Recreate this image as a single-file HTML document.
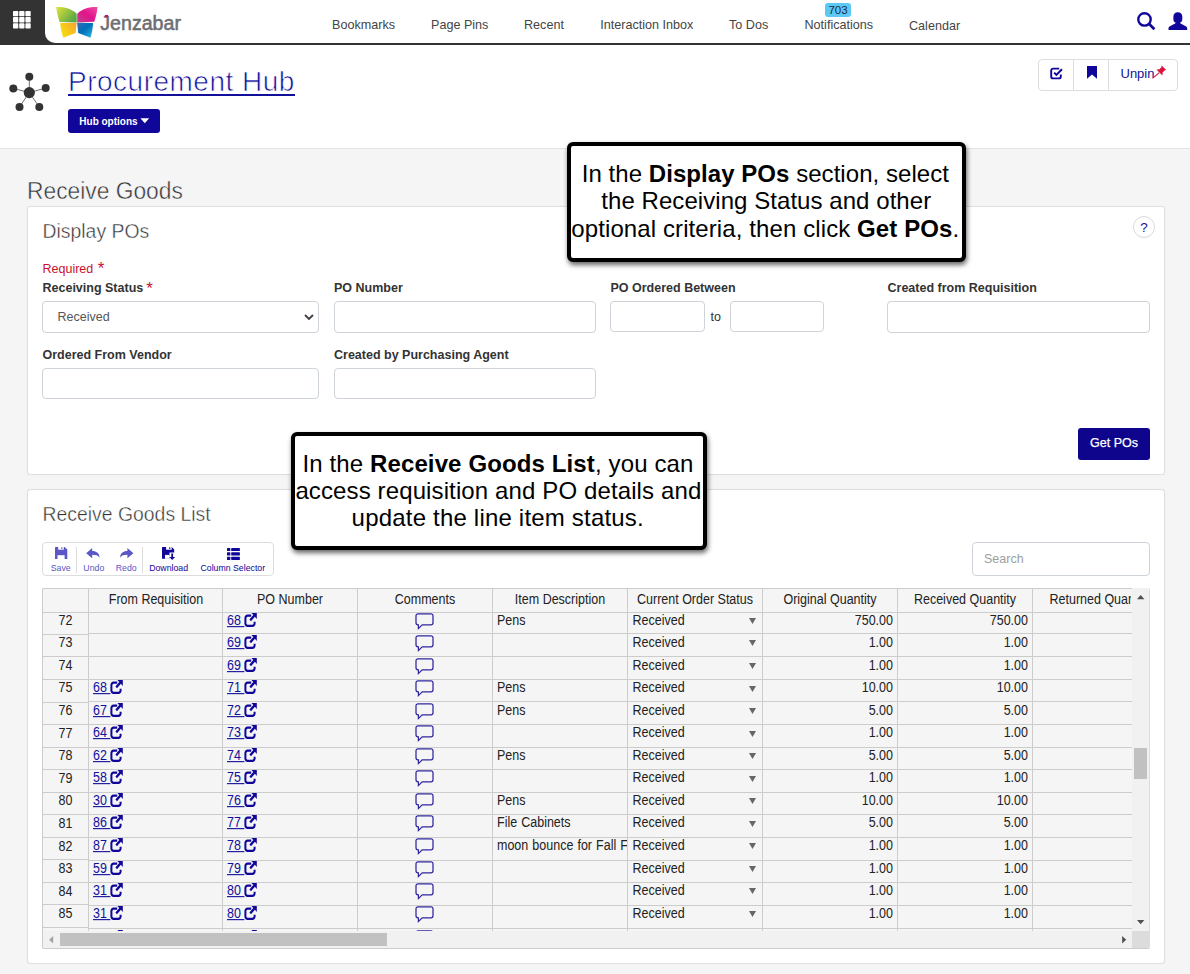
<!DOCTYPE html>
<html lang="en">
<head>
<meta charset="utf-8">
<title>Procurement Hub - Receive Goods</title>
<style>
*{box-sizing:border-box;margin:0;padding:0}
html,body{width:1190px;height:974px;overflow:hidden}
body{position:relative;background:#f5f5f5;font-family:"Liberation Sans",sans-serif;color:#333;font-size:12.5px}
.a{position:absolute}
svg{position:absolute;overflow:visible}
#hdr{position:absolute;left:0;top:0;width:1190px;height:45px;background:#333}
#hdr .logo{position:absolute;left:45px;top:0;width:1145px;height:43px;background:#fff;border-bottom-left-radius:10px}
.nav{position:absolute;top:17px;font-size:12.6px;color:#444;white-space:nowrap;line-height:15px}
.badge{position:absolute;left:825px;top:3px;width:26px;height:14px;background:#5bc8f5;border-radius:3px;font-size:11.5px;line-height:14px;text-align:center;color:#1d2b3a}
#hub{position:absolute;left:0;top:45px;width:1190px;height:104px;background:#fff;border-bottom:1px solid #e3e3e3}
#title{position:absolute;left:68px;top:65px;font-size:28px;line-height:34px;color:#12109a;white-space:nowrap;font-weight:400;letter-spacing:0.5px;-webkit-text-stroke:0.7px #fff}
#title u{text-decoration:none}
#tul{position:absolute;left:68px;top:94px;width:227px;height:2px;background:#12109a}
#hubopt{position:absolute;left:68px;top:109px;width:92px;height:24px;background:#10069a;border-radius:3px;color:#fff;font-size:10px;font-weight:bold;line-height:25px;padding-left:11.3px;white-space:nowrap}
#btng{position:absolute;left:1038px;top:59px;width:140px;height:32px;border:1px solid #ddd;border-radius:4px;background:#fff}
#btng i{position:absolute;top:0;width:1px;height:30px;background:#ddd}
h2.rg{position:absolute;left:27px;top:175px;font-size:22.8px;font-weight:400;color:#333;line-height:30px;white-space:nowrap;-webkit-text-stroke:0.45px #f5f5f5;transform:scaleY(1.07);transform-origin:0 6.2px}
.card{position:absolute;left:27px;width:1138px;background:#fff;border:1px solid #dfdfdf;border-radius:3px;box-shadow:0 0 1px rgba(0,0,0,.08)}
h3{position:absolute;left:42.5px;font-size:19.4px;font-weight:400;color:#333;line-height:26px;white-space:nowrap;-webkit-text-stroke:0.4px #fff;transform:scaleY(1.07);transform-origin:0 5.5px}
.lbl{position:absolute;font-size:12.5px;font-weight:bold;color:#333;line-height:16px;white-space:nowrap}
.inp{position:absolute;height:32px;border:1px solid #ced4da;border-radius:4px;background:#fff}
.req{color:#c8102e}
.callout{position:absolute;background:#fff;border:4px solid #000;border-radius:6px;box-shadow:1px 3px 5px rgba(0,0,0,.6)}
.cl{position:absolute;line-height:28px;color:#000;white-space:nowrap}
#tb{position:absolute;left:42px;top:542px;width:232px;height:34px;border:1px solid #ddd;border-radius:4px;background:#fff}
.tl{position:absolute;top:563px;font-size:8.75px;line-height:10px;white-space:nowrap;text-align:center}
.dis{color:#5b57c6}
.en{color:#10069a}
#grid{position:absolute;left:42px;top:588px;width:1108px;height:361px;background:#f5f5f5;border:1px solid #ccc;border-right-color:#ddd;border-radius:2px}
.hl{position:absolute;height:1px;background:#ccc}
.vl{position:absolute;width:1px;background:#ccc}
.ht{position:absolute;top:591px;height:16px;line-height:16px;font-size:12.5px;color:#222;text-align:center;white-space:nowrap;overflow:hidden;transform:scaleY(1.11);transform-origin:0 3.4px}
.t{position:absolute;height:16px;line-height:16px;font-size:12.5px;color:#222;white-space:nowrap;overflow:hidden;transform:scaleY(1.11);transform-origin:0 12.3px}
.t a{color:#12109a;text-decoration:underline}
.clip{position:absolute;left:43px;top:613px;width:1089px;height:318px;overflow:hidden}
</style>
</head>
<body>
<div id="hdr"><div class="logo"></div></div>
<svg style="left:13px;top:11px" width="18" height="18" viewBox="0 0 18 18"><rect x="0" y="0" width="5.3" height="5.3" rx="0.7" fill="#fff"/><rect x="6.2" y="0" width="5.3" height="5.3" rx="0.7" fill="#fff"/><rect x="12.4" y="0" width="5.3" height="5.3" rx="0.7" fill="#fff"/><rect x="0" y="6.1" width="5.3" height="5.3" rx="0.7" fill="#fff"/><rect x="6.2" y="6.1" width="5.3" height="5.3" rx="0.7" fill="#fff"/><rect x="12.4" y="6.1" width="5.3" height="5.3" rx="0.7" fill="#fff"/><rect x="0" y="12.2" width="5.3" height="5.3" rx="0.7" fill="#fff"/><rect x="6.2" y="12.2" width="5.3" height="5.3" rx="0.7" fill="#fff"/><rect x="12.4" y="12.2" width="5.3" height="5.3" rx="0.7" fill="#fff"/></svg>
<svg style="left:55px;top:6px" width="44" height="33" viewBox="55 6 44 33">
<defs>
<linearGradient id="gg" x1="0" y1="0" x2="1" y2="0.6"><stop offset="0" stop-color="#e3e33a"/><stop offset="0.45" stop-color="#a4c83f"/><stop offset="1" stop-color="#58a847"/></linearGradient>
<linearGradient id="gm" x1="0" y1="1" x2="1" y2="0"><stop offset="0" stop-color="#c4408f"/><stop offset="0.5" stop-color="#e0148a"/><stop offset="1" stop-color="#ef4fa6"/></linearGradient>
<linearGradient id="gy" x1="0" y1="0.6" x2="1" y2="0"><stop offset="0" stop-color="#f5dc14"/><stop offset="0.55" stop-color="#f7be1e"/><stop offset="1" stop-color="#f4a23c"/></linearGradient>
<linearGradient id="gb" x1="0" y1="0" x2="1" y2="1"><stop offset="0" stop-color="#3a6bb8"/><stop offset="0.45" stop-color="#0070b8"/><stop offset="1" stop-color="#2fb8ea"/></linearGradient>
</defs>
<path d="M56.1 7.1 C63 6.8 72 8.6 76.7 13.8 L76.8 22.4 L59.5 22.1 C58 17 56.8 12 56.1 7.1Z" fill="url(#gg)"/>
<path d="M97.5 7.1 C90.5 6.8 82 8.6 77.3 13.8 L77.2 22.4 L94.2 21.7 C96 17 97 12 97.5 7.1Z" fill="url(#gm)"/>
<path d="M60.1 23.1 L76.6 22.8 L75.6 32.9 L63.2 37.7 C61.6 33 60.6 28 60.1 23.1Z" fill="url(#gy)"/>
<path d="M93.1 23.1 L77.1 22.8 L78.2 32.9 L90.5 37.7 C92 33 92.8 28 93.1 23.1Z" fill="url(#gb)"/>
</svg>
<div class="a" style="left:100.3px;top:12px;font-size:19.6px;line-height:22px;color:#6d6e71;white-space:nowrap;-webkit-text-stroke:0.55px #6d6e71">Jenzabar</div>
<div class="a" style="left:105px;top:14.6px;width:2.8px;height:2.2px;background:#e6007e"></div>
<div class="nav" style="left:332px;top:18px">Bookmarks</div>
<div class="nav" style="left:431px;top:18px">Page Pins</div>
<div class="nav" style="left:524px;top:18px">Recent</div>
<div class="nav" style="left:600.3px;top:18px">Interaction Inbox</div>
<div class="nav" style="left:729px;top:18px">To Dos</div>
<div class="nav" style="left:804.5px;top:18px">Notifications</div>
<div class="nav" style="left:909px;top:19px">Calendar</div>
<div class="badge">703</div>
<svg style="left:1137px;top:11px" width="19" height="20" viewBox="0 0 19 20"><circle cx="7.5" cy="8.4" r="6.2" fill="none" stroke="#10069a" stroke-width="2.4"/><path d="M12.2 13 L17.4 18.2" stroke="#10069a" stroke-width="2.7" stroke-linecap="butt"/></svg>
<svg style="left:1167.7px;top:11.6px" width="20" height="19" viewBox="0 0 20 19"><path d="M9.8 0.2 C12.6 0.2 14.3 1.8 14.3 4.6 V7.4 C14.3 8.8 13.4 10 12.2 10.6 V11.2 L18.2 14.6 C19 15.1 19.2 15.8 19.2 16.6 V18.1 H0.5 V16.6 C0.5 15.8 0.7 15.1 1.5 14.6 L7.5 11.2 V10.6 C6.3 10 5.4 8.8 5.4 7.4 V4.6 C5.4 1.8 7 0.2 9.8 0.2Z" fill="#10069a"/></svg>
<div id="hub"></div>
<svg style="left:0;top:45px" width="60" height="104" viewBox="0 45 60 104"><line x1="29.3" y1="92.6" x2="29.3" y2="76.7" stroke="#333" stroke-width="0.7"/><line x1="29.3" y1="92.6" x2="13.3" y2="88.4" stroke="#333" stroke-width="0.7"/><line x1="29.3" y1="92.6" x2="45.7" y2="88.1" stroke="#333" stroke-width="0.7"/><line x1="29.3" y1="92.6" x2="19.5" y2="106.9" stroke="#333" stroke-width="0.7"/><line x1="29.3" y1="92.6" x2="39.3" y2="106.9" stroke="#333" stroke-width="0.7"/><circle cx="29.3" cy="76.7" r="4" fill="#333"/><circle cx="13.3" cy="88.4" r="4" fill="#333"/><circle cx="45.7" cy="88.1" r="4" fill="#333"/><circle cx="19.5" cy="106.9" r="4" fill="#333"/><circle cx="39.3" cy="106.9" r="4" fill="#333"/><circle cx="29.3" cy="92.6" r="5.6" fill="#333"/></svg>
<div id="title">Procurement Hub</div><div id="tul"></div>
<div id="hubopt">Hub options<svg style="left:71.8px;top:8.6px" width="9.6" height="5.6" viewBox="0 0 10 6"><path d="M0.3 0.3 L9.7 0.3 L5 5.6Z" fill="#fff"/></svg></div>
<div id="btng"><i style="left:34px"></i><i style="left:69px"></i></div>
<svg style="left:1050px;top:66.5px" width="13" height="13" viewBox="0 0 13 13"><path d="M9.2 1.6 H3.2 A2 2 0 0 0 1.2 3.6 V9.4 A2 2 0 0 0 3.2 11.4 H8.8 A2 2 0 0 0 10.8 9.4 V7.6" fill="none" stroke="#10069a" stroke-width="1.9"/><path d="M4.2 5.6 L6.4 7.9 L12 2.2" fill="none" stroke="#10069a" stroke-width="2"/></svg>
<svg style="left:1087px;top:66px" width="10" height="13" viewBox="0 0 10 13"><path d="M0 0 H10 V12.8 L5 8.6 L0 12.8Z" fill="#10069a"/></svg>
<div class="a" style="left:1120.5px;top:66px;font-size:13px;line-height:16px;color:#12109a;white-space:nowrap">Unpin</div>
<svg style="left:1152px;top:65px" width="15" height="14" viewBox="0 0 15 14"><path d="M9.6 0.6 L14.2 5 L12.6 5.4 L10.6 7.4 L10.4 10.4 L4.4 4.6 L7.4 4.2 L9.4 2.2Z" fill="#dc143c"/><path d="M7.2 7.6 L0.6 13.4" stroke="#dc143c" stroke-width="1.1"/></svg>
<h2 class="rg">Receive Goods</h2>
<div class="card" style="top:206px;height:269px"></div>
<h3 style="top:217px">Display POs</h3>
<div class="a" style="left:1133px;top:216px;width:22px;height:22px;border:1px solid #d9d9d9;border-radius:11px;background:#fff;color:#12109a;font-size:13.5px;line-height:22px;text-align:center">?</div>
<div class="a req" style="left:42.5px;top:261px;font-size:12.5px;line-height:16px;white-space:nowrap">Required <span style="font-size:17px;line-height:10px;position:relative;top:0.6px;left:1px">*</span></div>
<div class="lbl" style="left:42.5px;top:280px">Receiving Status<span class="req" style="font-size:17px;line-height:10px;position:relative;top:1.7px;left:3px;font-weight:normal">*</span></div>
<div class="lbl" style="left:334px;top:280px">PO Number</div>
<div class="lbl" style="left:610.5px;top:280px">PO Ordered Between</div>
<div class="lbl" style="left:887.5px;top:280px">Created from Requisition</div>
<div class="lbl" style="left:42.5px;top:347px">Ordered From Vendor</div>
<div class="lbl" style="left:334px;top:347px">Created by Purchasing Agent</div>
<div class="inp" style="left:42px;top:301px;width:277px;height:32px"></div>
<div class="inp" style="left:334px;top:301px;width:262px;height:32px"></div>
<div class="inp" style="left:610px;top:301px;width:95px;height:31px"></div>
<div class="inp" style="left:730px;top:301px;width:94px;height:31px"></div>
<div class="inp" style="left:887px;top:301px;width:263px;height:32px"></div>
<div class="inp" style="left:42px;top:368px;width:277px;height:31px"></div>
<div class="inp" style="left:334px;top:368px;width:262px;height:31px"></div>
<div class="a" style="left:57.5px;top:308.5px;font-size:12.5px;line-height:16px;color:#555">Received</div>
<svg style="left:304px;top:314px" width="10" height="7" viewBox="0 0 10 7"><path d="M1 1 L5 5 L9 1" fill="none" stroke="#404040" stroke-width="1.9"/></svg>
<div class="a" style="left:710.5px;top:308.5px;font-size:12.5px;line-height:16px;color:#333">to</div>
<div class="a" style="left:1078px;top:428px;width:72px;height:32px;background:#0e058c;border-radius:3px;color:#fff;font-size:12.5px;line-height:30px;text-align:center;-webkit-text-stroke:0.25px #fff">Get POs</div>
<div class="card" style="top:489px;height:475px"></div>
<h3 style="top:500px">Receive Goods List</h3>
<div id="tb"></div>
<div class="vl" style="left:76px;top:547px;height:26px;background:#ddd"></div><div class="vl" style="left:142px;top:547px;height:26px;background:#ddd"></div>
<svg style="left:54.6px;top:546.9px" width="12.3" height="12" viewBox="0 0 12.3 12"><path d="M0 0.5 Q0 0 0.5 0 H9.7 L12.3 2.6 V12 H0Z" fill="#5b57c6"/><rect x="3.2" y="0" width="5.6" height="2.7" fill="#fff"/><rect x="6.3" y="0.3" width="1.1" height="1.7" fill="#5b57c6"/><rect x="2.5" y="8.2" width="7.1" height="3.8" fill="#fff"/></svg>
<svg style="left:86.3px;top:547.8px" width="13.6" height="10.3" viewBox="0 0 13.6 10.3"><path d="M6.2 0 V2.9 C10.5 2.9 13.3 5 13.6 9.8 C12 7.4 10 6.8 6.2 6.8 V10.3 L0.2 5.2Z" fill="#5b57c6"/></svg>
<svg style="left:119.6px;top:547.8px" width="13.6" height="10.3" viewBox="0 0 13.6 10.3"><path d="M7.4 0 V2.9 C3.1 2.9 0.3 5 0 9.8 C1.6 7.4 3.6 6.8 7.4 6.8 V10.3 L13.4 5.2Z" fill="#5b57c6"/></svg>
<svg style="left:162.2px;top:546.8px" width="13.2" height="13" viewBox="0 0 13.2 13"><path d="M0 0.5 Q0 0 0.5 0 H9.8 L12.2 2.4 V5.4 H7.5 V11.8 H0Z" fill="#10069a"/><rect x="4.1" y="0" width="5.6" height="2.7" fill="#fff"/><rect x="7.2" y="0.3" width="1.1" height="1.7" fill="#10069a"/><rect x="3" y="7.9" width="4.6" height="3.9" fill="#fff"/><path d="M9.3 6.6 H11.1 V10 H13.1 L10.2 13 L7.3 10 H9.3Z" fill="#10069a"/></svg>
<svg style="left:226.5px;top:547.9px" width="13" height="12" viewBox="0 0 13 12"><rect x="0" y="0" width="3.3" height="3.1" rx="0.5" fill="#10069a"/><rect x="4.2" y="0" width="8.7" height="3.1" rx="0.4" fill="#10069a"/><rect x="0" y="4.3" width="3.3" height="3.3" rx="0.5" fill="#10069a"/><rect x="4.2" y="4.3" width="8.7" height="3.3" rx="0.4" fill="#10069a"/><rect x="0" y="8.8" width="3.3" height="3.1" rx="0.5" fill="#10069a"/><rect x="4.2" y="8.8" width="8.7" height="3.1" rx="0.4" fill="#10069a"/></svg>
<div class="tl dis" style="left:15.7px;width:90px">Save</div>
<div class="tl dis" style="left:48.8px;width:90px">Undo</div>
<div class="tl dis" style="left:81.2px;width:90px">Redo</div>
<div class="tl en" style="left:123.6px;width:90px">Download</div>
<div class="tl en" style="left:187.8px;width:90px">Column Selector</div>
<div class="inp" style="left:972px;top:542px;width:178px;height:34px"></div><div class="a" style="left:984px;top:551px;font-size:12.5px;line-height:16px;color:#9e9e9e">Search</div>
<div id="grid"></div>
<div class="a" style="left:1132px;top:588px;width:17px;height:360px;background:#f1f1f1"></div>
<div class="a" style="left:43px;top:931px;width:1106px;height:17px;background:#f1f1f1"></div>
<div class="a" style="left:1132px;top:931px;width:17px;height:17px;background:#dcdcdc"></div>
<div class="a" style="left:1134px;top:748px;width:13px;height:31px;background:#c1c1c1"></div>
<div class="a" style="left:60px;top:933px;width:327px;height:13px;background:#c1c1c1"></div>
<svg style="left:1136.8px;top:595px" width="7.4" height="4.3" viewBox="0 0 9 5"><path d="M4.5 0 L9 5 H0Z" fill="#505050"/></svg>
<svg style="left:1136.8px;top:920px" width="7.4" height="4.3" viewBox="0 0 9 5"><path d="M0 0 H9 L4.5 5Z" fill="#505050"/></svg>
<svg style="left:49px;top:936px" width="4.3" height="7.4" viewBox="0 0 5 9"><path d="M5 0 V9 L0 4.5Z" fill="#a3a3a3"/></svg>
<svg style="left:1122px;top:936px" width="4.3" height="7.4" viewBox="0 0 5 9"><path d="M0 0 V9 L5 4.5Z" fill="#505050"/></svg>
<div class="hl" style="left:43px;top:612px;width:1089px"></div>
<div class="ht" style="left:89px;width:134px">From Requisition</div>
<div class="ht" style="left:223px;width:134px">PO Number</div>
<div class="ht" style="left:358px;width:134px">Comments</div>
<div class="ht" style="left:493px;width:134px">Item Description</div>
<div class="ht" style="left:628px;width:134px">Current Order Status</div>
<div class="ht" style="left:763px;width:134px">Original Quantity</div>
<div class="ht" style="left:898px;width:134px">Received Quantity</div>
<div class="ht" style="left:1033px;width:98.4px;text-align:left;padding-left:16.5px">Returned Quantity</div>
<div class="vl" style="left:88px;top:589px;height:342px"></div>
<div class="vl" style="left:222px;top:589px;height:342px"></div>
<div class="vl" style="left:357px;top:589px;height:342px"></div>
<div class="vl" style="left:492px;top:589px;height:342px"></div>
<div class="vl" style="left:627px;top:589px;height:342px"></div>
<div class="vl" style="left:762px;top:589px;height:342px"></div>
<div class="vl" style="left:897px;top:589px;height:342px"></div>
<div class="vl" style="left:1032px;top:589px;height:342px"></div>
<div class="clip">
<div class="hl" style="left:45px;top:20px;width:1044px"></div><div class="hl" style="left:0;top:21px;width:46px"></div><div class="t" style="left:0;top:-0.30px;width:45px;text-align:center">72</div><div class="t" style="left:184px;top:-0.40px;width:130px;height:18px"><a>68&nbsp;</a><svg style="position:relative;display:inline-block;vertical-align:-1.7px;margin-left:0px" width="13" height="13" viewBox="0 0 13 13"><path d="M7.2 2.6 H3.6 A2.2 2.2 0 0 0 1.4 4.8 V9.6 A2.2 2.2 0 0 0 3.6 11.8 H8.4 A2.2 2.2 0 0 0 10.6 9.6 V8" fill="none" stroke="#10069a" stroke-width="2"/><path d="M7.4 0.2 H12.8 V5.6 L10.9 3.7 L7 7.6 L5.4 6 L9.3 2.1Z" fill="#10069a"/></svg></div><div class="a" style="left:371.5px;top:-0.40px;width:19px;height:17px"><svg style="left:0;top:0" width="19" height="17" viewBox="0 0 19 17"><path d="M3 0.8 H16 A2 2 0 0 1 18 2.8 V9.8 A2 2 0 0 1 16 11.8 H7.2 L3.4 15.6 V11.8 H3 A2 2 0 0 1 1 9.8 V2.8 A2 2 0 0 1 3 0.8Z" fill="none" stroke="#2f279e" stroke-width="1.25"/></svg></div><div class="t" style="left:454px;top:-0.40px;width:130px;word-spacing:0.6px">Pens</div><div class="t" style="left:589.5px;top:-0.40px;width:100px">Received</div><svg style="left:705.5px;top:4.90px" width="7" height="6" viewBox="0 0 7 6"><path d="M0 0 H7 L3.5 6Z" fill="#666"/></svg><div class="t" style="left:720px;top:-0.40px;width:130px;text-align:right">750.00</div><div class="t" style="left:855px;top:-0.40px;width:130px;text-align:right">750.00</div>
<div class="hl" style="left:45px;top:43px;width:1044px"></div><div class="hl" style="left:0;top:43px;width:46px"></div><div class="t" style="left:0;top:22.29px;width:45px;text-align:center">73</div><div class="t" style="left:184px;top:22.14px;width:130px;height:18px"><a>69&nbsp;</a><svg style="position:relative;display:inline-block;vertical-align:-1.7px;margin-left:0px" width="13" height="13" viewBox="0 0 13 13"><path d="M7.2 2.6 H3.6 A2.2 2.2 0 0 0 1.4 4.8 V9.6 A2.2 2.2 0 0 0 3.6 11.8 H8.4 A2.2 2.2 0 0 0 10.6 9.6 V8" fill="none" stroke="#10069a" stroke-width="2"/><path d="M7.4 0.2 H12.8 V5.6 L10.9 3.7 L7 7.6 L5.4 6 L9.3 2.1Z" fill="#10069a"/></svg></div><div class="a" style="left:371.5px;top:22.14px;width:19px;height:17px"><svg style="left:0;top:0" width="19" height="17" viewBox="0 0 19 17"><path d="M3 0.8 H16 A2 2 0 0 1 18 2.8 V9.8 A2 2 0 0 1 16 11.8 H7.2 L3.4 15.6 V11.8 H3 A2 2 0 0 1 1 9.8 V2.8 A2 2 0 0 1 3 0.8Z" fill="none" stroke="#2f279e" stroke-width="1.25"/></svg></div><div class="t" style="left:589.5px;top:22.14px;width:100px">Received</div><svg style="left:705.5px;top:27.44px" width="7" height="6" viewBox="0 0 7 6"><path d="M0 0 H7 L3.5 6Z" fill="#666"/></svg><div class="t" style="left:720px;top:22.14px;width:130px;text-align:right">1.00</div><div class="t" style="left:855px;top:22.14px;width:130px;text-align:right">1.00</div>
<div class="hl" style="left:45px;top:66px;width:1044px"></div><div class="hl" style="left:0;top:66px;width:46px"></div><div class="t" style="left:0;top:44.88px;width:45px;text-align:center">74</div><div class="t" style="left:184px;top:44.68px;width:130px;height:18px"><a>69&nbsp;</a><svg style="position:relative;display:inline-block;vertical-align:-1.7px;margin-left:0px" width="13" height="13" viewBox="0 0 13 13"><path d="M7.2 2.6 H3.6 A2.2 2.2 0 0 0 1.4 4.8 V9.6 A2.2 2.2 0 0 0 3.6 11.8 H8.4 A2.2 2.2 0 0 0 10.6 9.6 V8" fill="none" stroke="#10069a" stroke-width="2"/><path d="M7.4 0.2 H12.8 V5.6 L10.9 3.7 L7 7.6 L5.4 6 L9.3 2.1Z" fill="#10069a"/></svg></div><div class="a" style="left:371.5px;top:44.68px;width:19px;height:17px"><svg style="left:0;top:0" width="19" height="17" viewBox="0 0 19 17"><path d="M3 0.8 H16 A2 2 0 0 1 18 2.8 V9.8 A2 2 0 0 1 16 11.8 H7.2 L3.4 15.6 V11.8 H3 A2 2 0 0 1 1 9.8 V2.8 A2 2 0 0 1 3 0.8Z" fill="none" stroke="#2f279e" stroke-width="1.25"/></svg></div><div class="t" style="left:589.5px;top:44.68px;width:100px">Received</div><svg style="left:705.5px;top:49.98px" width="7" height="6" viewBox="0 0 7 6"><path d="M0 0 H7 L3.5 6Z" fill="#666"/></svg><div class="t" style="left:720px;top:44.68px;width:130px;text-align:right">1.00</div><div class="t" style="left:855px;top:44.68px;width:130px;text-align:right">1.00</div>
<div class="hl" style="left:45px;top:88px;width:1044px"></div><div class="hl" style="left:0;top:89px;width:46px"></div><div class="t" style="left:0;top:67.47px;width:45px;text-align:center">75</div><div class="t" style="left:50px;top:67.22px;width:130px;height:18px"><a>68&nbsp;</a><svg style="position:relative;display:inline-block;vertical-align:-1.7px;margin-left:0px" width="13" height="13" viewBox="0 0 13 13"><path d="M7.2 2.6 H3.6 A2.2 2.2 0 0 0 1.4 4.8 V9.6 A2.2 2.2 0 0 0 3.6 11.8 H8.4 A2.2 2.2 0 0 0 10.6 9.6 V8" fill="none" stroke="#10069a" stroke-width="2"/><path d="M7.4 0.2 H12.8 V5.6 L10.9 3.7 L7 7.6 L5.4 6 L9.3 2.1Z" fill="#10069a"/></svg></div><div class="t" style="left:184px;top:67.22px;width:130px;height:18px"><a>71&nbsp;</a><svg style="position:relative;display:inline-block;vertical-align:-1.7px;margin-left:0px" width="13" height="13" viewBox="0 0 13 13"><path d="M7.2 2.6 H3.6 A2.2 2.2 0 0 0 1.4 4.8 V9.6 A2.2 2.2 0 0 0 3.6 11.8 H8.4 A2.2 2.2 0 0 0 10.6 9.6 V8" fill="none" stroke="#10069a" stroke-width="2"/><path d="M7.4 0.2 H12.8 V5.6 L10.9 3.7 L7 7.6 L5.4 6 L9.3 2.1Z" fill="#10069a"/></svg></div><div class="a" style="left:371.5px;top:67.22px;width:19px;height:17px"><svg style="left:0;top:0" width="19" height="17" viewBox="0 0 19 17"><path d="M3 0.8 H16 A2 2 0 0 1 18 2.8 V9.8 A2 2 0 0 1 16 11.8 H7.2 L3.4 15.6 V11.8 H3 A2 2 0 0 1 1 9.8 V2.8 A2 2 0 0 1 3 0.8Z" fill="none" stroke="#2f279e" stroke-width="1.25"/></svg></div><div class="t" style="left:454px;top:67.22px;width:130px;word-spacing:0.6px">Pens</div><div class="t" style="left:589.5px;top:67.22px;width:100px">Received</div><svg style="left:705.5px;top:72.52px" width="7" height="6" viewBox="0 0 7 6"><path d="M0 0 H7 L3.5 6Z" fill="#666"/></svg><div class="t" style="left:720px;top:67.22px;width:130px;text-align:right">10.00</div><div class="t" style="left:855px;top:67.22px;width:130px;text-align:right">10.00</div>
<div class="hl" style="left:45px;top:111px;width:1044px"></div><div class="hl" style="left:0;top:111px;width:46px"></div><div class="t" style="left:0;top:90.06px;width:45px;text-align:center">76</div><div class="t" style="left:50px;top:89.76px;width:130px;height:18px"><a>67&nbsp;</a><svg style="position:relative;display:inline-block;vertical-align:-1.7px;margin-left:0px" width="13" height="13" viewBox="0 0 13 13"><path d="M7.2 2.6 H3.6 A2.2 2.2 0 0 0 1.4 4.8 V9.6 A2.2 2.2 0 0 0 3.6 11.8 H8.4 A2.2 2.2 0 0 0 10.6 9.6 V8" fill="none" stroke="#10069a" stroke-width="2"/><path d="M7.4 0.2 H12.8 V5.6 L10.9 3.7 L7 7.6 L5.4 6 L9.3 2.1Z" fill="#10069a"/></svg></div><div class="t" style="left:184px;top:89.76px;width:130px;height:18px"><a>72&nbsp;</a><svg style="position:relative;display:inline-block;vertical-align:-1.7px;margin-left:0px" width="13" height="13" viewBox="0 0 13 13"><path d="M7.2 2.6 H3.6 A2.2 2.2 0 0 0 1.4 4.8 V9.6 A2.2 2.2 0 0 0 3.6 11.8 H8.4 A2.2 2.2 0 0 0 10.6 9.6 V8" fill="none" stroke="#10069a" stroke-width="2"/><path d="M7.4 0.2 H12.8 V5.6 L10.9 3.7 L7 7.6 L5.4 6 L9.3 2.1Z" fill="#10069a"/></svg></div><div class="a" style="left:371.5px;top:89.76px;width:19px;height:17px"><svg style="left:0;top:0" width="19" height="17" viewBox="0 0 19 17"><path d="M3 0.8 H16 A2 2 0 0 1 18 2.8 V9.8 A2 2 0 0 1 16 11.8 H7.2 L3.4 15.6 V11.8 H3 A2 2 0 0 1 1 9.8 V2.8 A2 2 0 0 1 3 0.8Z" fill="none" stroke="#2f279e" stroke-width="1.25"/></svg></div><div class="t" style="left:454px;top:89.76px;width:130px;word-spacing:0.6px">Pens</div><div class="t" style="left:589.5px;top:89.76px;width:100px">Received</div><svg style="left:705.5px;top:95.06px" width="7" height="6" viewBox="0 0 7 6"><path d="M0 0 H7 L3.5 6Z" fill="#666"/></svg><div class="t" style="left:720px;top:89.76px;width:130px;text-align:right">5.00</div><div class="t" style="left:855px;top:89.76px;width:130px;text-align:right">5.00</div>
<div class="hl" style="left:45px;top:134px;width:1044px"></div><div class="hl" style="left:0;top:134px;width:46px"></div><div class="t" style="left:0;top:112.65px;width:45px;text-align:center">77</div><div class="t" style="left:50px;top:112.30px;width:130px;height:18px"><a>64&nbsp;</a><svg style="position:relative;display:inline-block;vertical-align:-1.7px;margin-left:0px" width="13" height="13" viewBox="0 0 13 13"><path d="M7.2 2.6 H3.6 A2.2 2.2 0 0 0 1.4 4.8 V9.6 A2.2 2.2 0 0 0 3.6 11.8 H8.4 A2.2 2.2 0 0 0 10.6 9.6 V8" fill="none" stroke="#10069a" stroke-width="2"/><path d="M7.4 0.2 H12.8 V5.6 L10.9 3.7 L7 7.6 L5.4 6 L9.3 2.1Z" fill="#10069a"/></svg></div><div class="t" style="left:184px;top:112.30px;width:130px;height:18px"><a>73&nbsp;</a><svg style="position:relative;display:inline-block;vertical-align:-1.7px;margin-left:0px" width="13" height="13" viewBox="0 0 13 13"><path d="M7.2 2.6 H3.6 A2.2 2.2 0 0 0 1.4 4.8 V9.6 A2.2 2.2 0 0 0 3.6 11.8 H8.4 A2.2 2.2 0 0 0 10.6 9.6 V8" fill="none" stroke="#10069a" stroke-width="2"/><path d="M7.4 0.2 H12.8 V5.6 L10.9 3.7 L7 7.6 L5.4 6 L9.3 2.1Z" fill="#10069a"/></svg></div><div class="a" style="left:371.5px;top:112.30px;width:19px;height:17px"><svg style="left:0;top:0" width="19" height="17" viewBox="0 0 19 17"><path d="M3 0.8 H16 A2 2 0 0 1 18 2.8 V9.8 A2 2 0 0 1 16 11.8 H7.2 L3.4 15.6 V11.8 H3 A2 2 0 0 1 1 9.8 V2.8 A2 2 0 0 1 3 0.8Z" fill="none" stroke="#2f279e" stroke-width="1.25"/></svg></div><div class="t" style="left:589.5px;top:112.30px;width:100px">Received</div><svg style="left:705.5px;top:117.60px" width="7" height="6" viewBox="0 0 7 6"><path d="M0 0 H7 L3.5 6Z" fill="#666"/></svg><div class="t" style="left:720px;top:112.30px;width:130px;text-align:right">1.00</div><div class="t" style="left:855px;top:112.30px;width:130px;text-align:right">1.00</div>
<div class="hl" style="left:45px;top:156px;width:1044px"></div><div class="hl" style="left:0;top:156px;width:46px"></div><div class="t" style="left:0;top:135.24px;width:45px;text-align:center">78</div><div class="t" style="left:50px;top:134.84px;width:130px;height:18px"><a>62&nbsp;</a><svg style="position:relative;display:inline-block;vertical-align:-1.7px;margin-left:0px" width="13" height="13" viewBox="0 0 13 13"><path d="M7.2 2.6 H3.6 A2.2 2.2 0 0 0 1.4 4.8 V9.6 A2.2 2.2 0 0 0 3.6 11.8 H8.4 A2.2 2.2 0 0 0 10.6 9.6 V8" fill="none" stroke="#10069a" stroke-width="2"/><path d="M7.4 0.2 H12.8 V5.6 L10.9 3.7 L7 7.6 L5.4 6 L9.3 2.1Z" fill="#10069a"/></svg></div><div class="t" style="left:184px;top:134.84px;width:130px;height:18px"><a>74&nbsp;</a><svg style="position:relative;display:inline-block;vertical-align:-1.7px;margin-left:0px" width="13" height="13" viewBox="0 0 13 13"><path d="M7.2 2.6 H3.6 A2.2 2.2 0 0 0 1.4 4.8 V9.6 A2.2 2.2 0 0 0 3.6 11.8 H8.4 A2.2 2.2 0 0 0 10.6 9.6 V8" fill="none" stroke="#10069a" stroke-width="2"/><path d="M7.4 0.2 H12.8 V5.6 L10.9 3.7 L7 7.6 L5.4 6 L9.3 2.1Z" fill="#10069a"/></svg></div><div class="a" style="left:371.5px;top:134.84px;width:19px;height:17px"><svg style="left:0;top:0" width="19" height="17" viewBox="0 0 19 17"><path d="M3 0.8 H16 A2 2 0 0 1 18 2.8 V9.8 A2 2 0 0 1 16 11.8 H7.2 L3.4 15.6 V11.8 H3 A2 2 0 0 1 1 9.8 V2.8 A2 2 0 0 1 3 0.8Z" fill="none" stroke="#2f279e" stroke-width="1.25"/></svg></div><div class="t" style="left:454px;top:134.84px;width:130px;word-spacing:0.6px">Pens</div><div class="t" style="left:589.5px;top:134.84px;width:100px">Received</div><svg style="left:705.5px;top:140.14px" width="7" height="6" viewBox="0 0 7 6"><path d="M0 0 H7 L3.5 6Z" fill="#666"/></svg><div class="t" style="left:720px;top:134.84px;width:130px;text-align:right">5.00</div><div class="t" style="left:855px;top:134.84px;width:130px;text-align:right">5.00</div>
<div class="hl" style="left:45px;top:179px;width:1044px"></div><div class="hl" style="left:0;top:179px;width:46px"></div><div class="t" style="left:0;top:157.83px;width:45px;text-align:center">79</div><div class="t" style="left:50px;top:157.38px;width:130px;height:18px"><a>58&nbsp;</a><svg style="position:relative;display:inline-block;vertical-align:-1.7px;margin-left:0px" width="13" height="13" viewBox="0 0 13 13"><path d="M7.2 2.6 H3.6 A2.2 2.2 0 0 0 1.4 4.8 V9.6 A2.2 2.2 0 0 0 3.6 11.8 H8.4 A2.2 2.2 0 0 0 10.6 9.6 V8" fill="none" stroke="#10069a" stroke-width="2"/><path d="M7.4 0.2 H12.8 V5.6 L10.9 3.7 L7 7.6 L5.4 6 L9.3 2.1Z" fill="#10069a"/></svg></div><div class="t" style="left:184px;top:157.38px;width:130px;height:18px"><a>75&nbsp;</a><svg style="position:relative;display:inline-block;vertical-align:-1.7px;margin-left:0px" width="13" height="13" viewBox="0 0 13 13"><path d="M7.2 2.6 H3.6 A2.2 2.2 0 0 0 1.4 4.8 V9.6 A2.2 2.2 0 0 0 3.6 11.8 H8.4 A2.2 2.2 0 0 0 10.6 9.6 V8" fill="none" stroke="#10069a" stroke-width="2"/><path d="M7.4 0.2 H12.8 V5.6 L10.9 3.7 L7 7.6 L5.4 6 L9.3 2.1Z" fill="#10069a"/></svg></div><div class="a" style="left:371.5px;top:157.38px;width:19px;height:17px"><svg style="left:0;top:0" width="19" height="17" viewBox="0 0 19 17"><path d="M3 0.8 H16 A2 2 0 0 1 18 2.8 V9.8 A2 2 0 0 1 16 11.8 H7.2 L3.4 15.6 V11.8 H3 A2 2 0 0 1 1 9.8 V2.8 A2 2 0 0 1 3 0.8Z" fill="none" stroke="#2f279e" stroke-width="1.25"/></svg></div><div class="t" style="left:589.5px;top:157.38px;width:100px">Received</div><svg style="left:705.5px;top:162.68px" width="7" height="6" viewBox="0 0 7 6"><path d="M0 0 H7 L3.5 6Z" fill="#666"/></svg><div class="t" style="left:720px;top:157.38px;width:130px;text-align:right">1.00</div><div class="t" style="left:855px;top:157.38px;width:130px;text-align:right">1.00</div>
<div class="hl" style="left:45px;top:201px;width:1044px"></div><div class="hl" style="left:0;top:201px;width:46px"></div><div class="t" style="left:0;top:180.42px;width:45px;text-align:center">80</div><div class="t" style="left:50px;top:179.92px;width:130px;height:18px"><a>30&nbsp;</a><svg style="position:relative;display:inline-block;vertical-align:-1.7px;margin-left:0px" width="13" height="13" viewBox="0 0 13 13"><path d="M7.2 2.6 H3.6 A2.2 2.2 0 0 0 1.4 4.8 V9.6 A2.2 2.2 0 0 0 3.6 11.8 H8.4 A2.2 2.2 0 0 0 10.6 9.6 V8" fill="none" stroke="#10069a" stroke-width="2"/><path d="M7.4 0.2 H12.8 V5.6 L10.9 3.7 L7 7.6 L5.4 6 L9.3 2.1Z" fill="#10069a"/></svg></div><div class="t" style="left:184px;top:179.92px;width:130px;height:18px"><a>76&nbsp;</a><svg style="position:relative;display:inline-block;vertical-align:-1.7px;margin-left:0px" width="13" height="13" viewBox="0 0 13 13"><path d="M7.2 2.6 H3.6 A2.2 2.2 0 0 0 1.4 4.8 V9.6 A2.2 2.2 0 0 0 3.6 11.8 H8.4 A2.2 2.2 0 0 0 10.6 9.6 V8" fill="none" stroke="#10069a" stroke-width="2"/><path d="M7.4 0.2 H12.8 V5.6 L10.9 3.7 L7 7.6 L5.4 6 L9.3 2.1Z" fill="#10069a"/></svg></div><div class="a" style="left:371.5px;top:179.92px;width:19px;height:17px"><svg style="left:0;top:0" width="19" height="17" viewBox="0 0 19 17"><path d="M3 0.8 H16 A2 2 0 0 1 18 2.8 V9.8 A2 2 0 0 1 16 11.8 H7.2 L3.4 15.6 V11.8 H3 A2 2 0 0 1 1 9.8 V2.8 A2 2 0 0 1 3 0.8Z" fill="none" stroke="#2f279e" stroke-width="1.25"/></svg></div><div class="t" style="left:454px;top:179.92px;width:130px;word-spacing:0.6px">Pens</div><div class="t" style="left:589.5px;top:179.92px;width:100px">Received</div><svg style="left:705.5px;top:185.22px" width="7" height="6" viewBox="0 0 7 6"><path d="M0 0 H7 L3.5 6Z" fill="#666"/></svg><div class="t" style="left:720px;top:179.92px;width:130px;text-align:right">10.00</div><div class="t" style="left:855px;top:179.92px;width:130px;text-align:right">10.00</div>
<div class="hl" style="left:45px;top:224px;width:1044px"></div><div class="hl" style="left:0;top:224px;width:46px"></div><div class="t" style="left:0;top:203.01px;width:45px;text-align:center">81</div><div class="t" style="left:50px;top:202.46px;width:130px;height:18px"><a>86&nbsp;</a><svg style="position:relative;display:inline-block;vertical-align:-1.7px;margin-left:0px" width="13" height="13" viewBox="0 0 13 13"><path d="M7.2 2.6 H3.6 A2.2 2.2 0 0 0 1.4 4.8 V9.6 A2.2 2.2 0 0 0 3.6 11.8 H8.4 A2.2 2.2 0 0 0 10.6 9.6 V8" fill="none" stroke="#10069a" stroke-width="2"/><path d="M7.4 0.2 H12.8 V5.6 L10.9 3.7 L7 7.6 L5.4 6 L9.3 2.1Z" fill="#10069a"/></svg></div><div class="t" style="left:184px;top:202.46px;width:130px;height:18px"><a>77&nbsp;</a><svg style="position:relative;display:inline-block;vertical-align:-1.7px;margin-left:0px" width="13" height="13" viewBox="0 0 13 13"><path d="M7.2 2.6 H3.6 A2.2 2.2 0 0 0 1.4 4.8 V9.6 A2.2 2.2 0 0 0 3.6 11.8 H8.4 A2.2 2.2 0 0 0 10.6 9.6 V8" fill="none" stroke="#10069a" stroke-width="2"/><path d="M7.4 0.2 H12.8 V5.6 L10.9 3.7 L7 7.6 L5.4 6 L9.3 2.1Z" fill="#10069a"/></svg></div><div class="a" style="left:371.5px;top:202.46px;width:19px;height:17px"><svg style="left:0;top:0" width="19" height="17" viewBox="0 0 19 17"><path d="M3 0.8 H16 A2 2 0 0 1 18 2.8 V9.8 A2 2 0 0 1 16 11.8 H7.2 L3.4 15.6 V11.8 H3 A2 2 0 0 1 1 9.8 V2.8 A2 2 0 0 1 3 0.8Z" fill="none" stroke="#2f279e" stroke-width="1.25"/></svg></div><div class="t" style="left:454px;top:202.46px;width:130px;word-spacing:0.6px">File Cabinets</div><div class="t" style="left:589.5px;top:202.46px;width:100px">Received</div><svg style="left:705.5px;top:207.76px" width="7" height="6" viewBox="0 0 7 6"><path d="M0 0 H7 L3.5 6Z" fill="#666"/></svg><div class="t" style="left:720px;top:202.46px;width:130px;text-align:right">5.00</div><div class="t" style="left:855px;top:202.46px;width:130px;text-align:right">5.00</div>
<div class="hl" style="left:45px;top:247px;width:1044px"></div><div class="hl" style="left:0;top:246px;width:46px"></div><div class="t" style="left:0;top:225.60px;width:45px;text-align:center">82</div><div class="t" style="left:50px;top:225.00px;width:130px;height:18px"><a>87&nbsp;</a><svg style="position:relative;display:inline-block;vertical-align:-1.7px;margin-left:0px" width="13" height="13" viewBox="0 0 13 13"><path d="M7.2 2.6 H3.6 A2.2 2.2 0 0 0 1.4 4.8 V9.6 A2.2 2.2 0 0 0 3.6 11.8 H8.4 A2.2 2.2 0 0 0 10.6 9.6 V8" fill="none" stroke="#10069a" stroke-width="2"/><path d="M7.4 0.2 H12.8 V5.6 L10.9 3.7 L7 7.6 L5.4 6 L9.3 2.1Z" fill="#10069a"/></svg></div><div class="t" style="left:184px;top:225.00px;width:130px;height:18px"><a>78&nbsp;</a><svg style="position:relative;display:inline-block;vertical-align:-1.7px;margin-left:0px" width="13" height="13" viewBox="0 0 13 13"><path d="M7.2 2.6 H3.6 A2.2 2.2 0 0 0 1.4 4.8 V9.6 A2.2 2.2 0 0 0 3.6 11.8 H8.4 A2.2 2.2 0 0 0 10.6 9.6 V8" fill="none" stroke="#10069a" stroke-width="2"/><path d="M7.4 0.2 H12.8 V5.6 L10.9 3.7 L7 7.6 L5.4 6 L9.3 2.1Z" fill="#10069a"/></svg></div><div class="a" style="left:371.5px;top:225.00px;width:19px;height:17px"><svg style="left:0;top:0" width="19" height="17" viewBox="0 0 19 17"><path d="M3 0.8 H16 A2 2 0 0 1 18 2.8 V9.8 A2 2 0 0 1 16 11.8 H7.2 L3.4 15.6 V11.8 H3 A2 2 0 0 1 1 9.8 V2.8 A2 2 0 0 1 3 0.8Z" fill="none" stroke="#2f279e" stroke-width="1.25"/></svg></div><div class="t" style="left:454px;top:225.00px;width:130px;word-spacing:0.6px">moon bounce for Fall Festival</div><div class="t" style="left:589.5px;top:225.00px;width:100px">Received</div><svg style="left:705.5px;top:230.30px" width="7" height="6" viewBox="0 0 7 6"><path d="M0 0 H7 L3.5 6Z" fill="#666"/></svg><div class="t" style="left:720px;top:225.00px;width:130px;text-align:right">1.00</div><div class="t" style="left:855px;top:225.00px;width:130px;text-align:right">1.00</div>
<div class="hl" style="left:45px;top:269px;width:1044px"></div><div class="hl" style="left:0;top:269px;width:46px"></div><div class="t" style="left:0;top:248.19px;width:45px;text-align:center">83</div><div class="t" style="left:50px;top:247.54px;width:130px;height:18px"><a>59&nbsp;</a><svg style="position:relative;display:inline-block;vertical-align:-1.7px;margin-left:0px" width="13" height="13" viewBox="0 0 13 13"><path d="M7.2 2.6 H3.6 A2.2 2.2 0 0 0 1.4 4.8 V9.6 A2.2 2.2 0 0 0 3.6 11.8 H8.4 A2.2 2.2 0 0 0 10.6 9.6 V8" fill="none" stroke="#10069a" stroke-width="2"/><path d="M7.4 0.2 H12.8 V5.6 L10.9 3.7 L7 7.6 L5.4 6 L9.3 2.1Z" fill="#10069a"/></svg></div><div class="t" style="left:184px;top:247.54px;width:130px;height:18px"><a>79&nbsp;</a><svg style="position:relative;display:inline-block;vertical-align:-1.7px;margin-left:0px" width="13" height="13" viewBox="0 0 13 13"><path d="M7.2 2.6 H3.6 A2.2 2.2 0 0 0 1.4 4.8 V9.6 A2.2 2.2 0 0 0 3.6 11.8 H8.4 A2.2 2.2 0 0 0 10.6 9.6 V8" fill="none" stroke="#10069a" stroke-width="2"/><path d="M7.4 0.2 H12.8 V5.6 L10.9 3.7 L7 7.6 L5.4 6 L9.3 2.1Z" fill="#10069a"/></svg></div><div class="a" style="left:371.5px;top:247.54px;width:19px;height:17px"><svg style="left:0;top:0" width="19" height="17" viewBox="0 0 19 17"><path d="M3 0.8 H16 A2 2 0 0 1 18 2.8 V9.8 A2 2 0 0 1 16 11.8 H7.2 L3.4 15.6 V11.8 H3 A2 2 0 0 1 1 9.8 V2.8 A2 2 0 0 1 3 0.8Z" fill="none" stroke="#2f279e" stroke-width="1.25"/></svg></div><div class="t" style="left:589.5px;top:247.54px;width:100px">Received</div><svg style="left:705.5px;top:252.84px" width="7" height="6" viewBox="0 0 7 6"><path d="M0 0 H7 L3.5 6Z" fill="#666"/></svg><div class="t" style="left:720px;top:247.54px;width:130px;text-align:right">1.00</div><div class="t" style="left:855px;top:247.54px;width:130px;text-align:right">1.00</div>
<div class="hl" style="left:45px;top:292px;width:1044px"></div><div class="hl" style="left:0;top:291px;width:46px"></div><div class="t" style="left:0;top:270.78px;width:45px;text-align:center">84</div><div class="t" style="left:50px;top:270.08px;width:130px;height:18px"><a>31&nbsp;</a><svg style="position:relative;display:inline-block;vertical-align:-1.7px;margin-left:0px" width="13" height="13" viewBox="0 0 13 13"><path d="M7.2 2.6 H3.6 A2.2 2.2 0 0 0 1.4 4.8 V9.6 A2.2 2.2 0 0 0 3.6 11.8 H8.4 A2.2 2.2 0 0 0 10.6 9.6 V8" fill="none" stroke="#10069a" stroke-width="2"/><path d="M7.4 0.2 H12.8 V5.6 L10.9 3.7 L7 7.6 L5.4 6 L9.3 2.1Z" fill="#10069a"/></svg></div><div class="t" style="left:184px;top:270.08px;width:130px;height:18px"><a>80&nbsp;</a><svg style="position:relative;display:inline-block;vertical-align:-1.7px;margin-left:0px" width="13" height="13" viewBox="0 0 13 13"><path d="M7.2 2.6 H3.6 A2.2 2.2 0 0 0 1.4 4.8 V9.6 A2.2 2.2 0 0 0 3.6 11.8 H8.4 A2.2 2.2 0 0 0 10.6 9.6 V8" fill="none" stroke="#10069a" stroke-width="2"/><path d="M7.4 0.2 H12.8 V5.6 L10.9 3.7 L7 7.6 L5.4 6 L9.3 2.1Z" fill="#10069a"/></svg></div><div class="a" style="left:371.5px;top:270.08px;width:19px;height:17px"><svg style="left:0;top:0" width="19" height="17" viewBox="0 0 19 17"><path d="M3 0.8 H16 A2 2 0 0 1 18 2.8 V9.8 A2 2 0 0 1 16 11.8 H7.2 L3.4 15.6 V11.8 H3 A2 2 0 0 1 1 9.8 V2.8 A2 2 0 0 1 3 0.8Z" fill="none" stroke="#2f279e" stroke-width="1.25"/></svg></div><div class="t" style="left:589.5px;top:270.08px;width:100px">Received</div><svg style="left:705.5px;top:275.38px" width="7" height="6" viewBox="0 0 7 6"><path d="M0 0 H7 L3.5 6Z" fill="#666"/></svg><div class="t" style="left:720px;top:270.08px;width:130px;text-align:right">1.00</div><div class="t" style="left:855px;top:270.08px;width:130px;text-align:right">1.00</div>
<div class="hl" style="left:45px;top:315px;width:1044px"></div><div class="hl" style="left:0;top:314px;width:46px"></div><div class="t" style="left:0;top:293.37px;width:45px;text-align:center">85</div><div class="t" style="left:50px;top:292.62px;width:130px;height:18px"><a>31&nbsp;</a><svg style="position:relative;display:inline-block;vertical-align:-1.7px;margin-left:0px" width="13" height="13" viewBox="0 0 13 13"><path d="M7.2 2.6 H3.6 A2.2 2.2 0 0 0 1.4 4.8 V9.6 A2.2 2.2 0 0 0 3.6 11.8 H8.4 A2.2 2.2 0 0 0 10.6 9.6 V8" fill="none" stroke="#10069a" stroke-width="2"/><path d="M7.4 0.2 H12.8 V5.6 L10.9 3.7 L7 7.6 L5.4 6 L9.3 2.1Z" fill="#10069a"/></svg></div><div class="t" style="left:184px;top:292.62px;width:130px;height:18px"><a>80&nbsp;</a><svg style="position:relative;display:inline-block;vertical-align:-1.7px;margin-left:0px" width="13" height="13" viewBox="0 0 13 13"><path d="M7.2 2.6 H3.6 A2.2 2.2 0 0 0 1.4 4.8 V9.6 A2.2 2.2 0 0 0 3.6 11.8 H8.4 A2.2 2.2 0 0 0 10.6 9.6 V8" fill="none" stroke="#10069a" stroke-width="2"/><path d="M7.4 0.2 H12.8 V5.6 L10.9 3.7 L7 7.6 L5.4 6 L9.3 2.1Z" fill="#10069a"/></svg></div><div class="a" style="left:371.5px;top:292.62px;width:19px;height:17px"><svg style="left:0;top:0" width="19" height="17" viewBox="0 0 19 17"><path d="M3 0.8 H16 A2 2 0 0 1 18 2.8 V9.8 A2 2 0 0 1 16 11.8 H7.2 L3.4 15.6 V11.8 H3 A2 2 0 0 1 1 9.8 V2.8 A2 2 0 0 1 3 0.8Z" fill="none" stroke="#2f279e" stroke-width="1.25"/></svg></div><div class="t" style="left:589.5px;top:292.62px;width:100px">Received</div><svg style="left:705.5px;top:297.92px" width="7" height="6" viewBox="0 0 7 6"><path d="M0 0 H7 L3.5 6Z" fill="#666"/></svg><div class="t" style="left:720px;top:292.62px;width:130px;text-align:right">1.00</div><div class="t" style="left:855px;top:292.62px;width:130px;text-align:right">1.00</div>
<div class="hl" style="left:45px;top:337px;width:1044px"></div><div class="hl" style="left:0;top:336px;width:46px"></div><div class="t" style="left:0;top:315.96px;width:45px;text-align:center">86</div><div class="t" style="left:50px;top:316.76px;width:130px;height:18px"><a>32&nbsp;</a><svg style="position:relative;display:inline-block;vertical-align:-1.7px;margin-left:0px" width="13" height="13" viewBox="0 0 13 13"><path d="M7.2 2.6 H3.6 A2.2 2.2 0 0 0 1.4 4.8 V9.6 A2.2 2.2 0 0 0 3.6 11.8 H8.4 A2.2 2.2 0 0 0 10.6 9.6 V8" fill="none" stroke="#10069a" stroke-width="2"/><path d="M7.4 0.2 H12.8 V5.6 L10.9 3.7 L7 7.6 L5.4 6 L9.3 2.1Z" fill="#10069a"/></svg></div><div class="t" style="left:184px;top:316.76px;width:130px;height:18px"><a>81&nbsp;</a><svg style="position:relative;display:inline-block;vertical-align:-1.7px;margin-left:0px" width="13" height="13" viewBox="0 0 13 13"><path d="M7.2 2.6 H3.6 A2.2 2.2 0 0 0 1.4 4.8 V9.6 A2.2 2.2 0 0 0 3.6 11.8 H8.4 A2.2 2.2 0 0 0 10.6 9.6 V8" fill="none" stroke="#10069a" stroke-width="2"/><path d="M7.4 0.2 H12.8 V5.6 L10.9 3.7 L7 7.6 L5.4 6 L9.3 2.1Z" fill="#10069a"/></svg></div><div class="a" style="left:371.5px;top:316.76px;width:19px;height:17px"><svg style="left:0;top:0" width="19" height="17" viewBox="0 0 19 17"><path d="M3 0.8 H16 A2 2 0 0 1 18 2.8 V9.8 A2 2 0 0 1 16 11.8 H7.2 L3.4 15.6 V11.8 H3 A2 2 0 0 1 1 9.8 V2.8 A2 2 0 0 1 3 0.8Z" fill="none" stroke="#2f279e" stroke-width="1.25"/></svg></div><div class="t" style="left:589.5px;top:316.76px;width:100px">Received</div><svg style="left:705.5px;top:322.06px" width="7" height="6" viewBox="0 0 7 6"><path d="M0 0 H7 L3.5 6Z" fill="#666"/></svg><div class="t" style="left:720px;top:316.76px;width:130px;text-align:right">1.00</div><div class="t" style="left:855px;top:316.76px;width:130px;text-align:right">1.00</div>
</div>
<div class="callout" style="left:567px;top:142px;width:399px;height:120px"></div>
<div class="cl" style="left:581.8px;top:159.87px;font-size:24px;letter-spacing:0.047px">In the <b>Display POs</b> section, select</div>
<div class="cl" style="left:601.3px;top:186.77px;font-size:24px;letter-spacing:0.057px">the Receiving Status and other</div>
<div class="cl" style="left:571.3px;top:215.47px;font-size:24px;letter-spacing:0.1px">optional criteria, then click <b>Get POs</b>.</div>
<div class="callout" style="left:291px;top:432px;width:416px;height:118px"></div>
<div class="cl" style="left:302.4px;top:449.87px;font-size:24px;letter-spacing:0.124px">In the <b>Receive Goods List</b>, you can</div>
<div class="cl" style="left:295.4px;top:476.57px;font-size:24px;letter-spacing:0.119px">access requisition and PO details and</div>
<div class="cl" style="left:351.6px;top:503.67px;font-size:24px;letter-spacing:0.196px">update the line item status.</div>
</body>
</html>
